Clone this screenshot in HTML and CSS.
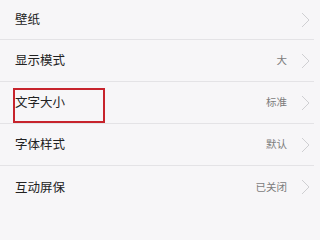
FILE: index.html
```html
<!DOCTYPE html>
<html lang="zh">
<head>
<meta charset="utf-8">
<link rel="stylesheet" href="styles.css">
</head>
<body>
<ul class="list">
  <li class="row">
    <span class="label">壁纸</span>
    <span class="right">
      <svg class="chev" viewBox="0 0 9 16" width="9" height="16"><polyline points="1,1 8,8 1,15" /></svg>
    </span>
  </li>
  <li class="row">
    <span class="label">显示模式</span>
    <span class="right">
      <span class="value">大</span>
      <svg class="chev" viewBox="0 0 9 16" width="9" height="16"><polyline points="1,1 8,8 1,15" /></svg>
    </span>
  </li>
  <li class="row highlighted">
    <span class="label">文字大小</span>
    <span class="right">
      <span class="value">标准</span>
      <svg class="chev" viewBox="0 0 9 16" width="9" height="16"><polyline points="1,1 8,8 1,15" /></svg>
    </span>
    <span class="mark"></span>
  </li>
  <li class="row">
    <span class="label">字体样式</span>
    <span class="right">
      <span class="value">默认</span>
      <svg class="chev" viewBox="0 0 9 16" width="9" height="16"><polyline points="1,1 8,8 1,15" /></svg>
    </span>
  </li>
  <li class="row">
    <span class="label">互动屏保</span>
    <span class="right">
      <span class="value">已关闭</span>
      <svg class="chev" viewBox="0 0 9 16" width="9" height="16"><polyline points="1,1 8,8 1,15" /></svg>
    </span>
  </li>
</ul>
</body>
</html>
```
FILE: styles.css
```css
html, body {
  margin: 0;
  padding: 0;
  background: #f7f6f8;
  width: 314px;
  height: 208px;
  overflow: hidden;
  font-family: "Noto Sans CJK SC", "Noto Sans", sans-serif;
}

.list {
  list-style: none;
  margin: 0;
  padding: 0;
  display: flex;
  flex-direction: column;
}

.row {
  position: relative;
  height: 41px;
  display: flex;
  align-items: center;
  justify-content: space-between;
  padding: 0 4px 0 15px;
  border-bottom: 1px solid #e4e3e6;
}

.row:first-child {
  height: 39px;
}

.row:last-child {
  border-bottom: none;
  height: 42px;
}

.label {
  font-size: 12.5px;
  color: #222;
  line-height: 1;
}

.right {
  display: flex;
  align-items: center;
  gap: 14px;
}

.value {
  font-size: 10.5px;
  color: #7c7c7c;
  line-height: 1;
}

.chev {
  display: block;
}

.chev polyline {
  fill: none;
  stroke: #cfcfd2;
  stroke-width: 1;
}

.mark {
  position: absolute;
  left: 13px;
  top: 6px;
  width: 88px;
  height: 31px;
  border: 2px solid #c7232c;
}
```
